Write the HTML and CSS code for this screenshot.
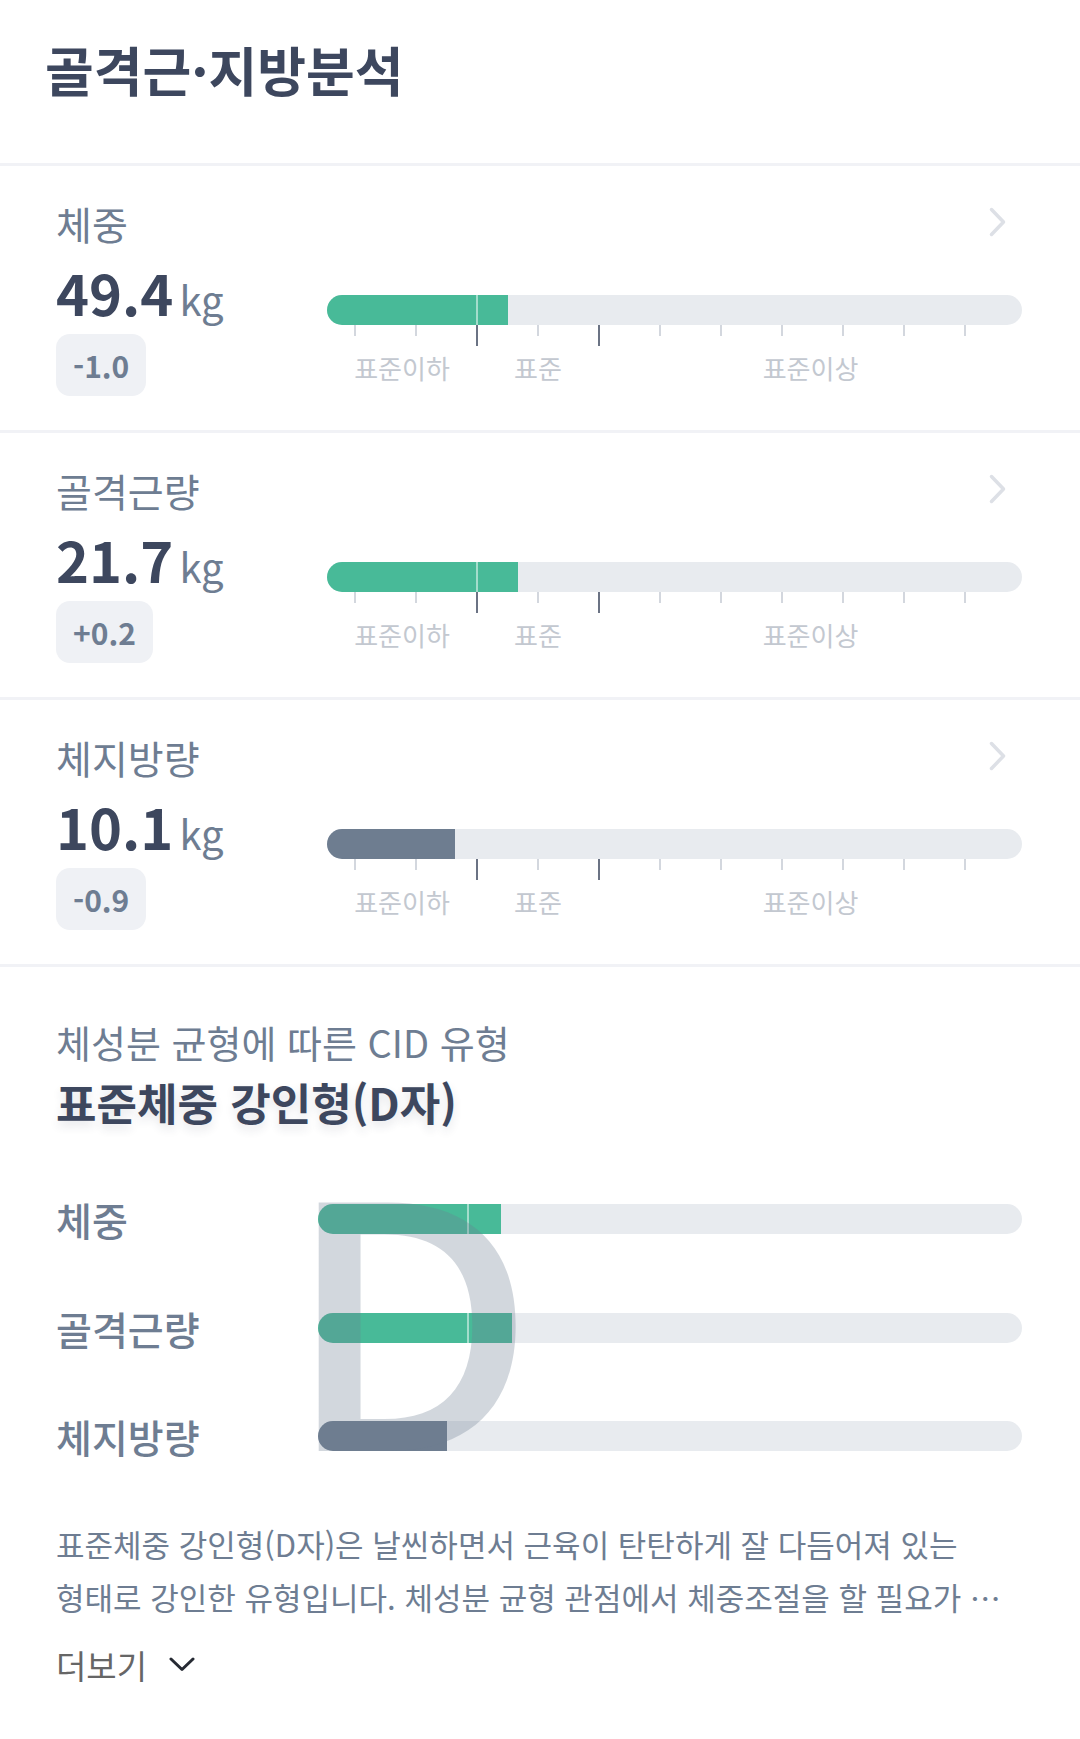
FILE: index.html
```html
<!DOCTYPE html>
<html lang="ko">
<head>
  <meta charset="UTF-8" />
  <meta name="viewport" content="width=device-width, initial-scale=1" />
  <title>골격근·지방분석</title>
  <link rel="stylesheet" href="styles.css">
</head>
<body>

  <header class="page-head">
    <h1 class="page-title">골격근·지방분석</h1>
  </header>

  <section class="metrics">
    <div class="metric">
      <div class="metric-info">
        <div class="metric-label">체중</div>
        <div class="metric-value"><span class="num">49.4</span><span class="unit">kg</span></div>
        <span class="delta">-1.0</span>
      </div>
      <div class="metric-gauge">
        <div class="metric-more">
          <svg width="17" height="30" viewBox="0 0 17 30"><path d="M2.5 2.5 L14.5 15 L2.5 27.5" /></svg>
        </div>
        <div class="track"><div class="fill fill-green" style="width:181px"><span class="mark"></span></div></div>
        <div class="ticks">
          <span class="tick"></span><span class="tick"></span><span class="tick tick-major"></span><span class="tick"></span><span class="tick tick-major"></span><span class="tick"></span><span class="tick"></span><span class="tick"></span><span class="tick"></span><span class="tick"></span><span class="tick"></span>
        </div>
        <div class="ranges">
          <span class="range range-low">표준이하</span><span class="range range-mid">표준</span><span class="range range-high">표준이상</span>
        </div>
      </div>
    </div>

    <div class="metric">
      <div class="metric-info">
        <div class="metric-label">골격근량</div>
        <div class="metric-value"><span class="num">21.7</span><span class="unit">kg</span></div>
        <span class="delta">+0.2</span>
      </div>
      <div class="metric-gauge">
        <div class="metric-more">
          <svg width="17" height="30" viewBox="0 0 17 30"><path d="M2.5 2.5 L14.5 15 L2.5 27.5" /></svg>
        </div>
        <div class="track"><div class="fill fill-green" style="width:191px"><span class="mark"></span></div></div>
        <div class="ticks">
          <span class="tick"></span><span class="tick"></span><span class="tick tick-major"></span><span class="tick"></span><span class="tick tick-major"></span><span class="tick"></span><span class="tick"></span><span class="tick"></span><span class="tick"></span><span class="tick"></span><span class="tick"></span>
        </div>
        <div class="ranges">
          <span class="range range-low">표준이하</span><span class="range range-mid">표준</span><span class="range range-high">표준이상</span>
        </div>
      </div>
    </div>

    <div class="metric">
      <div class="metric-info">
        <div class="metric-label">체지방량</div>
        <div class="metric-value"><span class="num">10.1</span><span class="unit">kg</span></div>
        <span class="delta">-0.9</span>
      </div>
      <div class="metric-gauge">
        <div class="metric-more">
          <svg width="17" height="30" viewBox="0 0 17 30"><path d="M2.5 2.5 L14.5 15 L2.5 27.5" /></svg>
        </div>
        <div class="track"><div class="fill fill-gray" style="width:128px"></div></div>
        <div class="ticks">
          <span class="tick"></span><span class="tick"></span><span class="tick tick-major"></span><span class="tick"></span><span class="tick tick-major"></span><span class="tick"></span><span class="tick"></span><span class="tick"></span><span class="tick"></span><span class="tick"></span><span class="tick"></span>
        </div>
        <div class="ranges">
          <span class="range range-low">표준이하</span><span class="range range-mid">표준</span><span class="range range-high">표준이상</span>
        </div>
      </div>
    </div>
  </section>

  <section class="cid">
    <p class="cid-caption">체성분 균형에 따른 CID 유형</p>
    <h2 class="cid-type">표준체중 강인형(D자)</h2>

    <div class="cid-chart">
      <div class="cid-row">
        <span class="cid-label">체중</span>
        <div class="track"><div class="fill fill-green" style="width:183px"><span class="mark"></span></div></div>
      </div>
      <div class="cid-row">
        <span class="cid-label">골격근량</span>
        <div class="track"><div class="fill fill-green" style="width:194px"><span class="mark"></span></div></div>
      </div>
      <div class="cid-row">
        <span class="cid-label">체지방량</span>
        <div class="track"><div class="fill fill-gray" style="width:129px"></div></div>
      </div>
      <span class="cid-letter">D</span>
    </div>

    <p class="cid-desc">표준체중 강인형(D자)은 날씬하면서 근육이 탄탄하게 잘 다듬어져 있는 형태로 강인한 유형입니다. 체성분 균형 관점에서 체중조절을 할 필요가&nbsp; 없으며 지금의 생활습관을 꾸준히 유지하는 것이 좋습니다.</p>

    <button class="more" type="button">
      더보기
      <svg width="26" height="15" viewBox="0 0 26 15"><path d="M2 2 L13 12.5 L24 2" /></svg>
    </button>
  </section>

</body>
</html>
```

FILE: styles.css
```css
body {
  margin: 0;
  background: #fff;
  font-family: 'Noto Sans CJK KR', 'Noto Sans', sans-serif;
  color: #3d475e;
}

.page-head {
  padding: 34px 45px 59px;
}

.page-title {
  margin: 0;
  font-size: 53px;
  line-height: 70px;
  font-weight: 700;
  color: #3d475e;
}

/* metric rows */
.metric {
  display: flex;
  height: 264px;
  padding: 0 58px 0 56px;
  border-top: 3px solid #f1f2f6;
}

.metric:last-child {
  border-bottom: 3px solid #f1f2f6;
}

.metric-info {
  width: 271px;
  display: flex;
  flex-direction: column;
  align-items: flex-start;
  padding-top: 35px;
}

.metric-label {
  font-size: 39px;
  line-height: 44px;
  color: #6e7d92;
}

.metric-value {
  margin-top: 15px;
  font-size: 56px;
  line-height: 64px;
  white-space: nowrap;
}

.metric-value .num {
  font-weight: 700;
  color: #3d475e;
}

.metric-value .unit {
  margin-left: 6px;
  font-size: 40px;
  line-height: 40px;
  color: #6e7d92;
}

.delta {
  margin-top: 10px;
  height: 62px;
  padding: 0 17px;
  border-radius: 14px;
  background: #eff1f5;
  font-size: 30px;
  line-height: 62px;
  font-weight: 700;
  color: #6e7d92;
}

.metric-gauge {
  flex: 1;
  display: flex;
  flex-direction: column;
}

.metric-more {
  display: flex;
  justify-content: flex-end;
  padding-right: 16px;
  margin-top: 41px;
  height: 30px;
}

.metric-more svg path {
  fill: none;
  stroke: #dde0e6;
  stroke-width: 3.5;
  stroke-linecap: round;
  stroke-linejoin: round;
}

.metric-gauge .track {
  margin-top: 58px;
}

/* bars */
.track {
  height: 30px;
  border-radius: 15px;
  background: #e8ebef;
  overflow: hidden;
}

.fill {
  position: relative;
  height: 100%;
}

.fill-green {
  background: #48ba98;
}

.fill-gray {
  background: #6e7d90;
}

.fill .mark {
  position: absolute;
  top: 0;
  left: 149px;
  width: 2px;
  height: 100%;
  background: rgba(255, 255, 255, 0.5);
}

.ticks {
  display: flex;
  align-items: flex-start;
  gap: 59px;
  padding-left: 27px;
  height: 21px;
}

.tick {
  width: 2px;
  height: 11px;
  background: #d3d7de;
}

.tick-major {
  height: 21px;
  background: #6b7384;
}

.ranges {
  display: flex;
  margin-top: 7px;
  font-size: 26px;
  line-height: 30px;
  color: #c3c8d0;
}

.range {
  text-align: center;
}

.range-low { width: 150px; }
.range-mid { width: 122px; }
.range-high { flex: 1; }

/* CID type */
.cid {
  padding: 51px 58px 0 56px;
}

.cid-caption {
  margin: 0;
  font-size: 38px;
  line-height: 48px;
  color: #6e7d92;
}

.cid-type {
  margin: 9px 0 0;
  font-size: 44px;
  line-height: 54px;
  font-weight: 700;
  color: #3d475e;
  text-shadow: 0 5px 10px rgba(40, 50, 70, 0.12);
}

.cid-chart {
  position: relative;
  margin-top: 75px;
  display: flex;
  flex-direction: column;
  gap: 78.5px;
}

.cid-row {
  display: flex;
  align-items: center;
  height: 30px;
}

.cid-label {
  width: 262px;
  font-size: 39px;
  line-height: 30px;
  font-weight: 500;
  color: #6e7d92;
}

.cid-row .track {
  flex: 1;
}

.cid-letter {
  position: absolute;
  left: 230px;
  top: -68px;
  font-size: 337px;
  line-height: 337px;
  font-weight: 500;
  color: rgba(110, 125, 146, 0.31);
  transform: scaleX(1.07);
  transform-origin: 32px 0;
  pointer-events: none;
  user-select: none;
}

.cid-desc {
  margin: 65.5px 0 0;
  font-size: 31px;
  line-height: 53px;
  color: #6e7d92;
  word-break: keep-all;
  display: -webkit-box;
  -webkit-line-clamp: 2;
  -webkit-box-orient: vertical;
  overflow: hidden;
}

.more {
  margin-top: 22px;
  display: flex;
  align-items: center;
  gap: 22px;
  padding: 0;
  border: none;
  background: none;
  font-family: inherit;
  font-size: 33px;
  line-height: 40px;
  color: #666;
  cursor: pointer;
}

.more svg path {
  fill: none;
  stroke: #262a33;
  stroke-width: 3;
  stroke-linecap: round;
  stroke-linejoin: round;
}
```
